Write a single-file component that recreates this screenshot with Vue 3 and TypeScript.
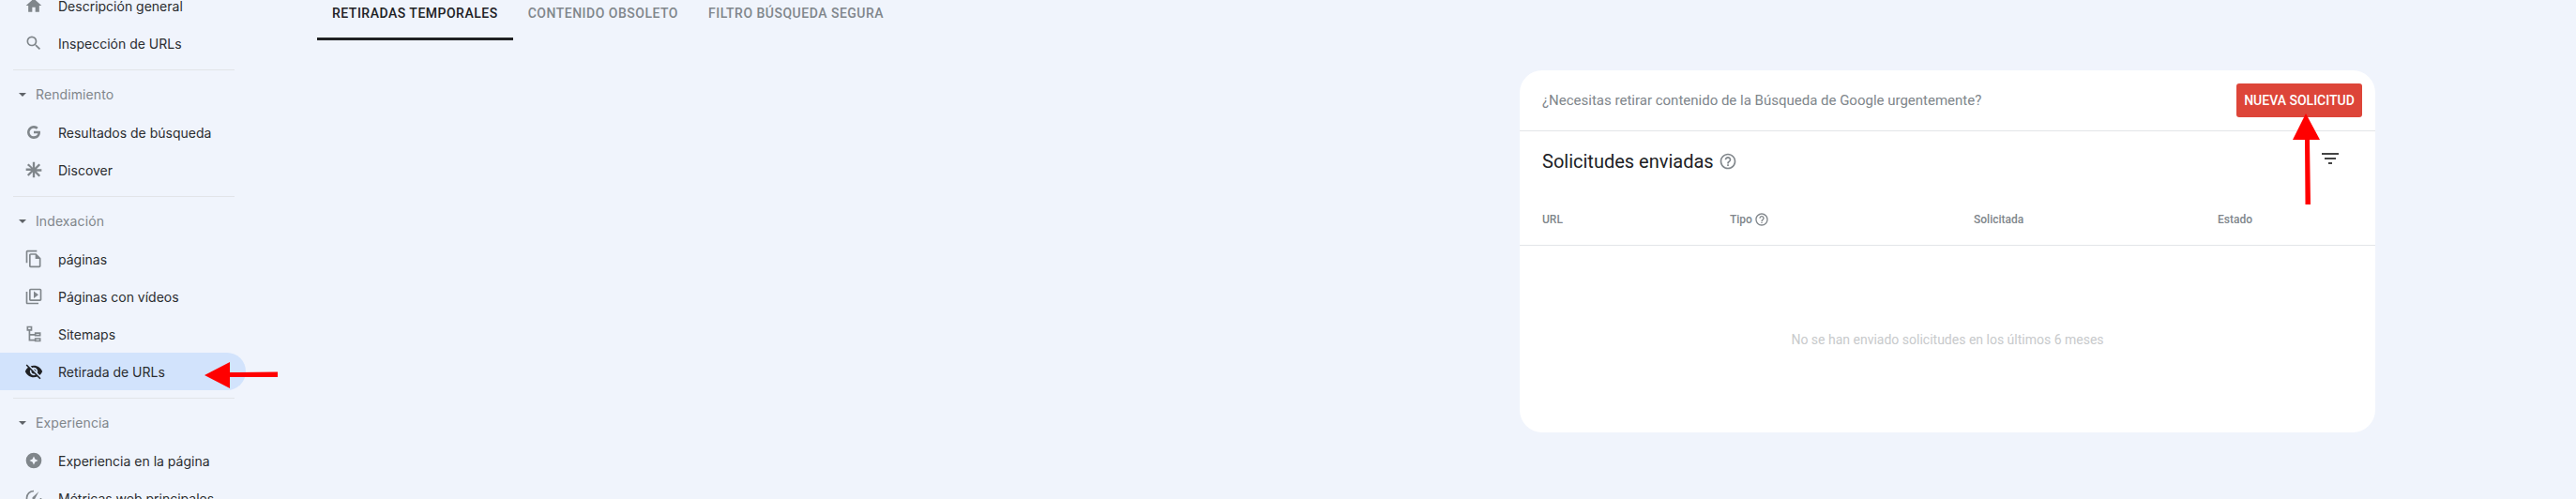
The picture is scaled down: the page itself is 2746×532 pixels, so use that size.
<script setup lang="ts">
type NavItem = { label: string; icon: string; active?: boolean };
type NavGroup = { title?: string; items: NavItem[] };

const icons: Record<string, string> = {
  home: 'M10 20v-6h4v6h5v-8h3L12 3 2 12h3v8z',
  search: 'M15.5 14h-.79l-.28-.27A6.471 6.471 0 0 0 16 9.5 6.5 6.5 0 1 0 9.5 16c1.61 0 3.09-.59 4.23-1.57l.27.28v.79l5 4.99L20.49 19l-4.99-5zm-6 0C7.01 14 5 11.99 5 9.5S7.01 5 9.5 5 14 7.01 14 9.5 11.99 14 9.5 14z',
  google: 'M12 10.6v3h5.2c-.6 2.3-2.5 3.6-5.2 3.6a5.2 5.2 0 1 1 3.4-9.1l2.2-2.2A8.3 8.3 0 1 0 12 20.3c4.9 0 8.4-3.4 8.4-8.4 0-.5-.1-.9-.2-1.3z',
  discover: 'M10.6 2h2.8v7.2l5.1-5.1 2 2-5.1 5.1H22v2.8h-6.6l5.1 5.1-2 2-5.1-5.1V22h-2.8v-6.9l-5.1 5.1-2-2 5.1-5.1H2v-2.8h6.6L3.500 6.100l2-2 5.100 5.100z',
  pages: 'M16 1H4c-1.1 0-2 .9-2 2v14h2V3h12V1zm-1 4H8c-1.1 0-1.99.9-1.99 2L6 21c0 1.1.89 2 1.99 2H19c1.1 0 2-.9 2-2V11l-6-6zM8 21V7h6v5h5v9H8z',
  video: 'M4 6H2v14c0 1.1.9 2 2 2h14v-2H4V6zm16-4H8c-1.1 0-2 .9-2 2v12c0 1.1.9 2 2 2h12c1.100 0 2-.9 2-2V4c0-1.1-.9-2-2-2zm0 14H8V4h12v12zM12 5.500v9l6-4.500z',
  sitemap: 'M3 2h7v6H7.500v4H13v-2h8v5h-8v-1H7.500v5H13v-2h8v5h-8v-1H5.500V8H3zm2 2v2h3V4zm10 8v1h4v-1zm0 7v1h4v-1z',
  hidden: 'M12 7c2.76 0 5 2.24 5 5 0 .65-.13 1.26-.36 1.83l2.92 2.92c1.51-1.26 2.7-2.89 3.43-4.75-1.73-4.39-6-7.5-11-7.5-1.4 0-2.74.25-3.98.7l2.16 2.16C10.74 7.13 11.35 7 12 7zM2 4.270l2.280 2.280.460.460A11.804 11.804 0 0 0 1 12c1.730 4.390 6 7.500 11 7.500 1.550 0 3.030-.3 4.380-.84l.42.420L19.730 22 21 20.730 3.270 3 2 4.270zM7.530 9.800l1.550 1.550c-.05.210-.08.430-.08.650 0 1.660 1.340 3 3 3 .220 0 .440-.03.650-.08l1.550 1.550c-.67.330-1.410.530-2.200.530-2.760 0-5-2.240-5-5 0-.790.200-1.530.530-2.200zm4.310-.78l3.150 3.150.020-.16c0-1.660-1.340-3-3-3l-.17.010z',
  experience: 'M12 2a10 10 0 1 0 0 20 10 10 0 0 0 0-20zm0 4.500l1.700 3.800 3.800 1.700-3.800 1.700-1.700 3.800-1.700-3.800-3.800-1.700 3.800-1.700z',
  vitals: 'M12 2a10 10 0 1 0 10 10h-2a8 8 0 1 1-8-8zm6.500 1.500l-7.800 7.200a1.800 1.800 0 1 0 2.600 2.600z',
};

const help = 'M11 18h2v-2h-2v2zm1-16C6.480 2 2 6.480 2 12s4.480 10 10 10 10-4.480 10-10S17.520 2 12 2zm0 18c-4.410 0-8-3.590-8-8s3.590-8 8-8 8 3.590 8 8-3.590 8-8 8zm0-14c-2.210 0-4 1.790-4 4h2c0-1.100.9-2 2-2s2 .9 2 2c0 2-3 1.750-3 5h2c0-2.250 3-2.500 3-5 0-2.210-1.790-4-4-4z';

const groups: NavGroup[] = [
  { items: [
    { label: 'Descripción general', icon: 'home' },
    { label: 'Inspección de URLs', icon: 'search' },
  ] },
  { title: 'Rendimiento', items: [
    { label: 'Resultados de búsqueda', icon: 'google' },
    { label: 'Discover', icon: 'discover' },
  ] },
  { title: 'Indexación', items: [
    { label: 'páginas', icon: 'pages' },
    { label: 'Páginas con vídeos', icon: 'video' },
    { label: 'Sitemaps', icon: 'sitemap' },
    { label: 'Retirada de URLs', icon: 'hidden', active: true },
  ] },
  { title: 'Experiencia', items: [
    { label: 'Experiencia en la página', icon: 'experience' },
    { label: 'Métricas web principales', icon: 'vitals' },
  ] },
];

const tabs = ['Retiradas temporales', 'Contenido obsoleto', 'Filtro búsqueda segura'];
</script>

<template>
  <div class="page">
    <aside class="sidebar">
      <section v-for="(group, i) in groups" :key="i" class="group">
        <div v-if="group.title" class="group__title">
          <span class="group__caret"></span>
          {{ group.title }}
        </div>
        <div
          v-for="item in group.items"
          :key="item.label"
          :class="['item', { 'item--active': item.active }]"
        >
          <svg class="item__icon" viewBox="0 0 24 24"><path :d="icons[item.icon]" fill-rule="evenodd" /></svg>
          <span>{{ item.label }}</span>
        </div>
      </section>
    </aside>

    <main class="main">
      <nav class="tabs">
        <div v-for="(tab, i) in tabs" :key="tab" :class="['tab', { 'tab--active': i === 0 }]">{{ tab }}</div>
      </nav>

      <div class="card">
        <div class="card__top">
          <span class="card__prompt">¿Necesitas retirar contenido de la Búsqueda de Google urgentemente?</span>
          <button class="card__button" type="button">Nueva solicitud</button>
        </div>
        <div class="card__heading">
          <h2 class="card__title">Solicitudes enviadas</h2>
          <svg class="help help--title" viewBox="0 0 24 24"><path :d="help" /></svg>
          <div class="filter"><i></i><i></i><i></i></div>
        </div>
        <div class="table-head">
          <span>URL</span>
          <span class="table-head__type">Tipo <svg class="help help--small" viewBox="0 0 24 24"><path :d="help" /></svg></span>
          <span>Solicitada</span>
          <span>Estado</span>
        </div>
        <div class="card__empty">No se han enviado solicitudes en los últimos 6 meses</div>
      </div>
    </main>

    <svg class="arrow arrow--left" width="90" height="40" viewBox="0 0 90 40">
      <path d="M2 20 L29 6 L29 17 L80 16.500 L80 22 L29 22 L29 34 Z" fill="#f00" />
    </svg>
    <svg class="arrow arrow--up" width="40" height="100" viewBox="0 0 40 100">
      <path d="M18 1 L4 29 L17 29 L17.500 98 L23 98 L22 29 L33 29 Z" fill="#f00" />
    </svg>
  </div>
</template>

<style scoped>
.page {
  position: relative;
  display: flex;
  width: 2746px;
  height: 532px;
  overflow: hidden;
  background: #f0f4fc;
  font-family: Roboto, "Liberation Sans", sans-serif;
}

.sidebar {
  flex: none;
  width: 262px;
  margin-top: -14px;
  font-family: Inter, "Noto Sans", sans-serif;
}

.group {
  position: relative;
  padding: 8px 0;
}

.group:first-child {
  padding-top: 0;
}

.group + .group::before {
  content: '';
  position: absolute;
  top: 0;
  left: 14px;
  width: 236px;
  height: 1px;
  background: #e2e4e8;
}

.group__title {
  display: flex;
  align-items: center;
  height: 37px;
  margin-top: 0;
  margin-bottom: 2px;
  padding-left: 20px;
  font-size: 14px;
  letter-spacing: 0.1px;
  color: #80868b;
}

.group__caret {
  width: 0;
  height: 0;
  margin-right: 10px;
  border-left: 4px solid transparent;
  border-right: 4px solid transparent;
  border-top: 4px solid #5f6368;
}

.item {
  display: flex;
  align-items: center;
  height: 40px;
  padding-left: 26px;
  font-size: 14px;
  color: #2b2d30;
  border-radius: 0 20px 20px 0;
}

.item--active {
  background: #d2e3fc;
}

.item__icon {
  flex: none;
  width: 20px;
  height: 20px;
  margin-right: 16px;
  fill: #80868b;
}

.item--active .item__icon {
  fill: #202124;
}

.main {
  flex: 1;
  min-width: 0;
  padding-left: 76px;
}

.tabs {
  display: flex;
  height: 43px;
}

.tab {
  padding: 5px 16px 0;
  height: 43px;
  box-sizing: border-box;
  font-size: 14px;
  line-height: 18px;
  font-weight: 500;
  letter-spacing: 0.5px;
  text-transform: uppercase;
  color: #80868b;
}

.tab--active {
  color: #202124;
  border-bottom: 3px solid #202124;
}

.card {
  width: 912px;
  height: 386px;
  margin: 32px 0 0 1282px;
  display: flex;
  flex-direction: column;
  background: #fff;
  border-radius: 24px;
}

.card__top {
  flex: none;
  display: flex;
  align-items: center;
  justify-content: space-between;
  height: 64px;
  padding: 0 14px 0 24px;
  border-bottom: 1px solid #e3e5e8;
}

.card__prompt {
  font-size: 15px;
  color: #80868b;
}

.card__button {
  width: 134px;
  height: 36px;
  border: none;
  border-radius: 3px;
  background: #dd4539;
  color: #fff;
  font-family: inherit;
  font-size: 14px;
  font-weight: 500;
  letter-spacing: 0;
  text-transform: uppercase;
  white-space: nowrap;
  padding: 0;
}

.card__heading {
  flex: none;
  position: relative;
  display: flex;
  align-items: center;
  height: 67px;
  padding: 0 24px 4px;
  box-sizing: border-box;
}

.card__title {
  margin: 0;
  font-size: 20px;
  font-weight: 400;
  color: #202124;
}

.help {
  fill: #80868b;
}

.help--title {
  width: 20px;
  height: 20px;
  margin-left: 5px;
}

.help--small {
  width: 16px;
  height: 16px;
  margin-left: 2px;
}

.filter {
  position: absolute;
  top: 23px;
  right: 39px;
  display: flex;
  flex-direction: column;
  align-items: center;
  gap: 3px;
}

.filter i {
  display: block;
  width: 18px;
  height: 2px;
  background: #444;
}

.filter i:nth-child(2) {
  width: 12px;
}

.filter i:nth-child(3) {
  width: 4px;
}

.table-head {
  flex: none;
  display: grid;
  grid-template-columns: 200px 260px 260px 1fr;
  align-items: center;
  height: 54px;
  padding-left: 24px;
  border-bottom: 1px solid #e3e5e8;
  font-size: 12px;
  font-weight: 500;
  color: #80868b;
}

.table-head__type {
  display: flex;
  align-items: center;
}

.card__empty {
  flex: 1;
  display: flex;
  align-items: center;
  justify-content: center;
  font-size: 14px;
  color: #c8cacc;
}

.arrow {
  position: absolute;
}

.arrow--left {
  left: 216px;
  top: 380px;
}

.arrow--up {
  left: 2440px;
  top: 120px;
}
</style>

<style>
body {
  margin: 0;
  overflow: hidden;
}
</style>
